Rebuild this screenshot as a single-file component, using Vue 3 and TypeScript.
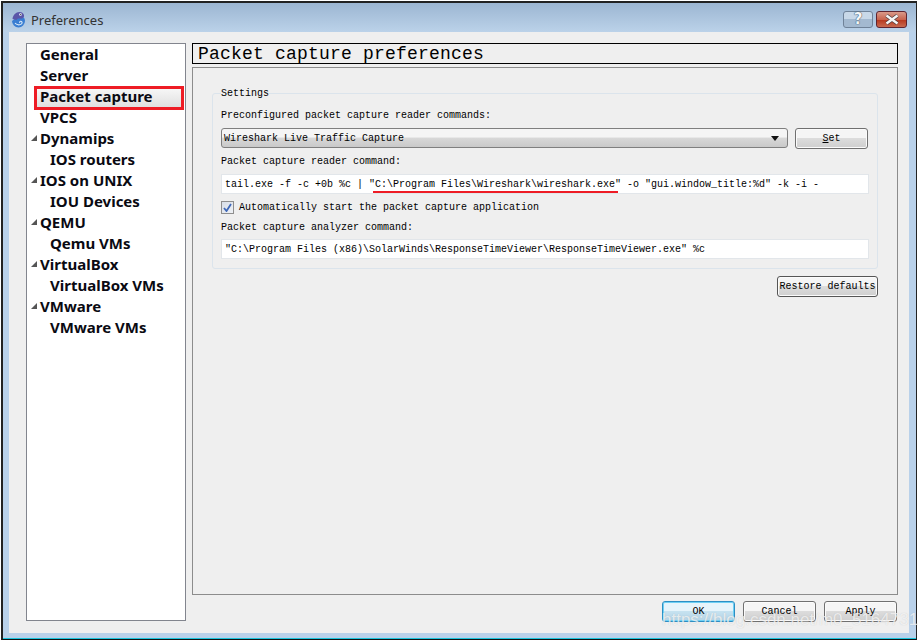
<script setup lang="ts">
interface NavItem { label: string; level: number; arrow?: boolean; selected?: boolean }
const nav: NavItem[] = [
  { label: 'General', level: 0 },
  { label: 'Server', level: 0 },
  { label: 'Packet capture', level: 0, selected: true },
  { label: 'VPCS', level: 0 },
  { label: 'Dynamips', level: 0, arrow: true },
  { label: 'IOS routers', level: 1 },
  { label: 'IOS on UNIX', level: 0, arrow: true },
  { label: 'IOU Devices', level: 1 },
  { label: 'QEMU', level: 0, arrow: true },
  { label: 'Qemu VMs', level: 1 },
  { label: 'VirtualBox', level: 0, arrow: true },
  { label: 'VirtualBox VMs', level: 1 },
  { label: 'VMware', level: 0, arrow: true },
  { label: 'VMware VMs', level: 1 },
]
</script>

<template>
  <div class="frame">
    <header class="titlebar">
      <svg class="appicon" width="16" height="18" viewBox="0 0 16 18">
        <path d="M1 11a6.5 6.5 0 0 0 13 0c0-1.500-.5-2.500-1.200-3.500L7 6z" fill="#3a7ed2" />
        <path d="M1.500 9c.5-4.500 4-7.500 7.500-7 3 .4 4.500 2.500 4 4.500-.4 1.800-2.500 2.500-4.500 2-1.500-.3-2.500.2-3 1.500z" fill="#5b56a8" />
        <circle cx="9.500" cy="4.500" r="1.300" fill="#f4f6fb" />
        <circle cx="9.700" cy="4.500" r=".6" fill="#222" />
        <path d="M4 13c1.500 2 4.500 2.500 6.500.8 1-.9.6-2.400-.6-2.500-1-.1-1.600.9-1 1.600" stroke="#dcecfa" stroke-width="1.100" fill="none" />
      </svg>
      <span class="wintitle">Preferences</span>
      <div class="caption">
        <button class="capbtn help">?</button>
        <button class="capbtn close">
          <svg width="16" height="11" viewBox="0 0 16 11">
            <path d="M2.500 1.500l11 8M13.500 1.500l-11 8" stroke="#4a3a3c" stroke-width="3.800" />
            <path d="M2.500 1.500l11 8M13.500 1.500l-11 8" stroke="#f6f6f6" stroke-width="2.500" />
          </svg>
        </button>
      </div>
    </header>

    <main class="client">
      <div class="body">
        <nav class="tree">
          <div
            v-for="item in nav"
            :key="item.label"
            class="node"
            :class="[item.level === 1 ? 'sub' : '', item.selected ? 'selected' : '']"
          >
            <span v-if="item.arrow" class="arrow"></span>
            <span>{{ item.label }}</span>
          </div>
        </nav>

        <section class="content">
          <h1 class="pagetitle">Packet capture preferences</h1>
          <div class="panel">
            <fieldset class="group">
              <legend>Settings</legend>
              <label class="lbl first">Preconfigured packet capture reader commands:</label>
              <div class="comborow">
                <div class="combo">
                  <span>Wireshark Live Traffic Capture</span>
                  <i class="drop"></i>
                </div>
                <button class="btn setbtn"><u>S</u>et</button>
              </div>
              <label class="lbl second">Packet capture reader command:</label>
              <div class="input">tail.exe -f -c +0b %c | <span class="marked">"C:\Program Files\Wireshark\wireshark.exe"</span> -o "gui.window_title:%d" -k -i -</div>
              <div class="check">
                <span class="box">
                  <svg width="9" height="9" viewBox="0 0 9 9"><path d="M1 5l2.500 3L8 1" stroke="#3f68b8" stroke-width="1.800" fill="none" /></svg>
                </span>
                <span class="checklabel">Automatically start the packet capture application</span>
              </div>
              <label class="lbl third">Packet capture analyzer command:</label>
              <div class="input">"C:\Program Files (x86)\SolarWinds\ResponseTimeViewer\ResponseTimeViewer.exe" %c</div>
            </fieldset>
            <div class="restore-row">
              <button class="btn restore">Restore defaults</button>
            </div>
          </div>
        </section>
      </div>

      <footer class="actions">
        <button class="btn act ok">OK</button>
        <button class="btn act">Cancel</button>
        <button class="btn act">Apply</button>
      </footer>
    </main>
    <div class="watermark">https://blog.csdn.net/m0_51647314</div>
  </div>
</template>

<style>
html, body { margin: 0; background: #fff; }
</style>

<style scoped>
* { box-sizing: border-box; }
.frame {
  position: relative;
  width: 916px;
  height: 639px;
  margin: 1px 0 0 1px;
  display: flex;
  flex-direction: column;
  border: 2px solid #222;
  border-bottom: 1px solid #111;
  border-right-width: 1px;
  background: #b9d1ea;
  box-shadow: inset 0 -1px 0 #19c3dc;
  font-family: "Liberation Mono", monospace;
  font-size: 10px;
  color: #000;
}
.titlebar {
  height: 29px;
  flex: none;
  display: flex;
  align-items: center;
  padding: 0 9px 0 8px;
  background: linear-gradient(#9cb6d2, #bbd2e9);
}
.appicon { margin-top: 2px; }
.wintitle {
  margin-left: 4px;
  margin-top: 5px;
  font: 13px "Noto Sans", sans-serif;
  color: #333;
}
.caption { margin-left: auto; margin-top: 3px; display: flex; gap: 3px; }
.capbtn {
  height: 17px;
  padding: 0;
  display: flex;
  align-items: center;
  justify-content: center;
  border-radius: 3px;
}
.help {
  width: 30px;
  border: 1px solid #6f8298;
  background: linear-gradient(#c8d8e8 0 50%, #a3b9d0 50% 100%);
  font: bold 15px "DejaVu Sans", sans-serif;
  color: #f4f6f8;
  text-shadow: 0 0 1px #30445a, 0 0 1px #30445a;
}
.close {
  width: 31px;
  border: 1px solid #5f2430;
  background: linear-gradient(#d99a8a, #c8644e 50%, #b83a20 55%, #c86a50);
}
.client {
  flex: 1;
  min-height: 0;
  margin: 0 7px 6px 6px;
  padding: 11px 11px 11px 17px;
  background: #efefef;
  display: flex;
  flex-direction: column;
}
.body { flex: 1; min-height: 0; display: flex; gap: 6px; }
.tree {
  width: 160px;
  height: 578px;
  flex: none;
  border: 1px solid #82858e;
  background: #fff;
  padding: 0;
  font: bold 15px/21px "Noto Sans", sans-serif;
  color: #0a0a12;
}
.node {
  position: relative;
  height: 21px;
  padding-left: 13px;
  white-space: nowrap;
}
.node.sub { padding-left: 23px; }
.node.selected {
  height: 24px;
  margin: 0 1px -3px 7px;
  padding-left: 6px;
  background: linear-gradient(#fafafa, #dcdcdc);
  outline: 3px solid #ee1c25;
  outline-offset: -3px;
}
.arrow {
  position: absolute;
  left: 4px;
  top: 7px;
  width: 0;
  height: 0;
  border-style: solid;
  border-width: 0 0 6px 6px;
  border-color: transparent transparent #555 transparent;
}
.content { flex: 1; min-width: 0; display: flex; flex-direction: column; height: 552px; gap: 3px; }
.pagetitle {
  margin: 0;
  height: 21px;
  border: 1px solid #000;
  padding-left: 5px;
  font: 18px/20px "Liberation Mono", monospace;
  letter-spacing: 0.2px;
}
.panel {
  flex: 1;
  border: 1px solid #8c8c8c;
  padding: 25px 19px 0;
}
.group {
  margin: 0;
  height: 176px;
  padding: 0 8px 0 8px;
  border: 1px solid #dbe4ec;
  border-radius: 3px;
  display: block;
  position: relative;
}
legend {
  position: absolute;
  left: 8px;
  top: -6px;
  padding: 0;
  background: #efefef;
  line-height: 12px;
}
.lbl { display: block; line-height: 12px; height: 12px; }
.lbl.first { margin-top: 16px; }
.lbl.second { margin-top: 7px; }
.lbl.third { margin-top: 8px; }
.comborow { margin-top: 6px; display: flex; gap: 7px; height: 21px; }
.combo {
  width: 567px;
  height: 20px;
  border: 1px solid #7f7f7f;
  border-radius: 3px;
  background: linear-gradient(#f5f5f5 0 45%, #d8d8d8 50%, #c9c9c9);
  display: flex;
  align-items: center;
  padding: 0 6px 0 2px;
  justify-content: space-between;
}
.drop {
  width: 0;
  height: 0;
  border-left: 4px solid transparent;
  border-right: 4px solid transparent;
  border-top: 5px solid #111;
  margin-right: 2px;
}
.btn {
  font: 10px "Liberation Mono", monospace;
  color: #000;
  padding: 0;
  height: 21px;
  border: 1px solid #707070;
  border-radius: 3px;
  background: linear-gradient(#f5f5f5 0 45%, #dcdcdc 50%, #cfcfcf);
  box-shadow: inset 0 0 0 1px #fbfbfb;
}
.setbtn { width: 73px; }
.input {
  height: 20px;
  margin-top: 6px;
  width: 648px;
  background: #fff;
  border: 1px solid #e2e6ea;
  line-height: 19px;
  padding-left: 3px;
  white-space: pre;
}
.third + .input { margin-top: 5px; }
.marked { position: relative; }
.marked::after {
  content: "";
  position: absolute;
  left: 4px;
  right: 3px;
  bottom: -3px;
  height: 2px;
  background: #ee1c25;
}
.check {
  display: flex;
  align-items: center;
  gap: 5px;
  margin-top: 6px;
  height: 14px;
}
.checklabel { padding-top: 1px; }
.box {
  width: 13px;
  height: 13px;
  border: 1px solid #8e8e8e;
  background: linear-gradient(135deg, #d8dee8, #eef1f5);
  display: flex;
  align-items: center;
  justify-content: center;
}
.restore-row { display: flex; justify-content: flex-end; margin-top: 7px; }
.restore { width: 101px; border-color: #555; }
.actions { display: flex; justify-content: flex-end; gap: 8px; margin-top: 4px; padding-right: 1px; height: 21px; flex: none; }
.act { width: 73px; }
.ok {
  border-color: #2c8fc4;
  background: linear-gradient(#e6f4fb 0 45%, #c6e2f0 50%, #b4d4e6);
  box-shadow: inset 0 0 0 1px #6fd0f4;
}
.watermark {
  position: absolute;
  left: 659px;
  top: 607px;
  font: 17px "Liberation Sans", sans-serif;
  color: rgba(255, 255, 255, 0.7);
  text-shadow: 0 0 1px rgba(130, 130, 130, 0.35);
  white-space: nowrap;
  pointer-events: none;
}
</style>
